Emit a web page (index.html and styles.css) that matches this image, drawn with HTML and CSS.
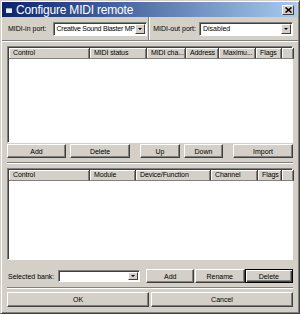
FILE: index.html
```html
<!DOCTYPE html>
<html lang="en">
<head>
  <meta charset="UTF-8">
  <title>Configure MIDI remote</title>
  <link rel="stylesheet" href="styles.css">
</head>
<body>
<div class="window">
  <div class="titlebar">
    <span class="app-icon"></span>
    <span class="title">Configure MIDI remote</span>
    <span class="close-btn">
      <svg width="7" height="6" viewBox="0 0 7 6"><path d="M0.5 0.5 L6.5 5.5 M6.5 0.5 L0.5 5.5" stroke="#000" stroke-width="1.6"/></svg>
    </span>
  </div>

  <div class="content">
    <div class="ports">
      <div class="port port-in">
        <span class="label">MIDI-in port:</span>
        <div class="select select-in"><span class="value">Creative Sound Blaster MP</span><span class="arrow"></span></div>
      </div>
      <div class="port port-out">
        <span class="label">MIDI-out port:</span>
        <div class="select select-out"><span class="value">Disabled</span><span class="arrow"></span></div>
      </div>
    </div>

    <div class="list list-controls">
      <div class="list-head">
        <span class="col" style="width:81px">Control</span>
        <span class="col" style="width:57px">MIDI status</span>
        <span class="col" style="width:39px">MIDI cha...</span>
        <span class="col" style="width:33px">Address</span>
        <span class="col" style="width:37px">Maximu...</span>
        <span class="col" style="width:26px">Flags</span>
        <span class="col col-fill"></span>
      </div>
    </div>

    <div class="btn-row row-top">
      <button class="btn b-add">Add</button>
      <button class="btn b-del">Delete</button>
      <button class="btn b-up">Up</button>
      <button class="btn b-down">Down</button>
      <button class="btn b-import">Import</button>
    </div>

    <div class="separator"></div>

    <div class="list list-bindings">
      <div class="list-head">
        <span class="col" style="width:81px">Control</span>
        <span class="col" style="width:46px">Module</span>
        <span class="col" style="width:75px">Device/Function</span>
        <span class="col" style="width:47px">Channel</span>
        <span class="col" style="width:24px">Flags</span>
        <span class="col col-fill"></span>
      </div>
    </div>

    <div class="btn-row row-bank">
      <span class="label">Selected bank:</span>
      <div class="select select-bank"><span class="value"></span><span class="arrow"></span></div>
      <button class="btn b-bank-add">Add</button>
      <button class="btn b-rename">Rename</button>
      <button class="btn b-bank-del focused">Delete</button>
    </div>

    <div class="separator sep-bottom"></div>

    <div class="btn-row row-ok">
      <button class="btn b-ok">OK</button>
      <button class="btn b-cancel">Cancel</button>
    </div>
  </div>
</div>
</body>
</html>
```

FILE: styles.css
```css
* {
  box-sizing: border-box;
}

body {
  margin: 0;
  background: #d4d0c8;
  font-family: "Liberation Sans", Arial, sans-serif;
  font-size: 7px;
  color: #000;
}

.window {
  width: 300px;
  height: 314px;
  background: #d4d0c8;
  border: 1px solid;
  border-color: #d4d0c8 #404040 #404040 #d4d0c8;
  box-shadow: inset 1px 1px #fff, inset -1px -1px #808080;
  padding: 1px 2px 0 1px;
}

.titlebar {
  height: 15px;
  display: flex;
  align-items: center;
  background: linear-gradient(to right, #0a246a, #a6caf0);
  color: #fff;
  padding: 0 3px 0 3px;
}

.app-icon {
  width: 6px;
  height: 5px;
  background: #e8e8f0;
  border-top: 1px solid #9aa;
  margin: 2px 4px 0 1px;
}

.title {
  font-size: 12px;
  flex: 1;
  letter-spacing: -0.2px;
}

.close-btn {
  width: 12px;
  height: 10px;
  background: #d4d0c8;
  border: 1px solid;
  border-color: #fff #404040 #404040 #fff;
  display: flex;
  align-items: center;
  justify-content: center;
  margin-top: 1px;
}

.content {
  padding: 0 4px 0 5px;
}

.ports {
  height: 24px;
  display: flex;
  border-bottom: 1px solid #808080;
  box-shadow: 0 1px #fff;
  margin: 0 -5px 0 -5px;
  padding: 0 5px;
}

.port {
  display: flex;
  align-items: center;
}

.port-in {
  width: 144px;
  padding-left: 1px;
  border-right: 1px solid #808080;
  box-shadow: 1px 0 #fff;
}

.port-out {
  flex: 1;
  padding-left: 4px;
}

.label {
  white-space: nowrap;
}

.select {
  height: 14px;
  background: #fff;
  border: 1px solid;
  border-color: #808080 #fff #fff #808080;
  box-shadow: inset 1px 1px #404040;
  display: flex;
  align-items: center;
  padding: 1px 1px 1px 2px;
  overflow: hidden;
}

.select .value {
  flex: 1;
  white-space: nowrap;
  overflow: hidden;
  padding-left: 1px;
}

.select .arrow {
  width: 10px;
  height: 10px;
  flex: none;
  background: #d4d0c8;
  border: 1px solid;
  border-color: #fff #404040 #404040 #fff;
  position: relative;
}

.select .arrow::after {
  content: "";
  position: absolute;
  left: 2px;
  top: 3px;
  border-left: 2px solid transparent;
  border-right: 2px solid transparent;
  border-top: 2px solid #000;
}

.select-in {
  width: 94px;
  margin-left: 6px;
}

.select-in .value {
  letter-spacing: -0.25px;
}

.select-out {
  width: 94px;
  margin-left: 3px;
}

.list {
  background: #fff;
  border: 1px solid;
  border-color: #808080 #fff #fff #808080;
  box-shadow: inset 1px 1px #404040;
  padding: 1px 0 0 1px;
}

.list-controls {
  margin-top: 5px;
  height: 97px;
}

.list-bindings {
  margin-top: 4px;
  height: 92px;
}

.list-head {
  display: flex;
  height: 11px;
}

.col {
  height: 11px;
  background: #d4d0c8;
  border-right: 1px solid #404040;
  border-bottom: 1px solid #808080;
  box-shadow: inset 1px 1px #fff, inset -1px 0 #808080;
  padding: 1px 0 0 4px;
  white-space: nowrap;
  overflow: hidden;
  flex: none;
  letter-spacing: -0.1px;
}

.col-fill {
  width: 12px;
}

.btn-row {
  display: flex;
  align-items: center;
}

.btn {
  height: 14px;
  padding: 0;
  font-family: "Liberation Sans", Arial, sans-serif;
  font-size: 7px;
  color: #000;
  background: #d4d0c8;
  border: 1px solid;
  border-color: #fff #404040 #404040 #fff;
  box-shadow: inset -1px -1px #808080;
}

.row-top {
  margin-top: 1px;
}

.b-add { width: 59px; }
.b-del { width: 60px; margin-left: 4px; }
.b-up { width: 40px; margin-left: 10px; }
.b-down { width: 39px; margin-left: 4px; }
.b-import { width: 60px; margin-left: 10px; }

.separator {
  height: 2px;
  border-top: 1px solid #808080;
  border-bottom: 1px solid #fff;
  margin-top: 4px;
}

.row-bank {
  margin-top: 9px;
  height: 14px;
}

.row-bank .label {
  padding-left: 1px;
}

.select-bank {
  width: 83px;
  height: 12px;
  margin-left: 4px;
}

.select-bank .arrow {
  height: 8px;
}

.select-bank .arrow::after {
  top: 2px;
}

.b-bank-add { width: 48px; margin-left: 6px; }
.b-rename { width: 50px; margin-left: 1px; }
.b-bank-del { width: 49px; }

.btn.focused {
  border: 1px solid #000;
  box-shadow: inset 1px 1px #fff, inset -1px -1px #404040, inset -2px -2px #808080;
}

.sep-bottom {
  margin-top: 4px;
}

.row-ok {
  margin-top: 3px;
}

.b-ok { width: 142px; height: 15px; }
.b-cancel { width: 142px; height: 15px; margin-left: 2px; }
```
